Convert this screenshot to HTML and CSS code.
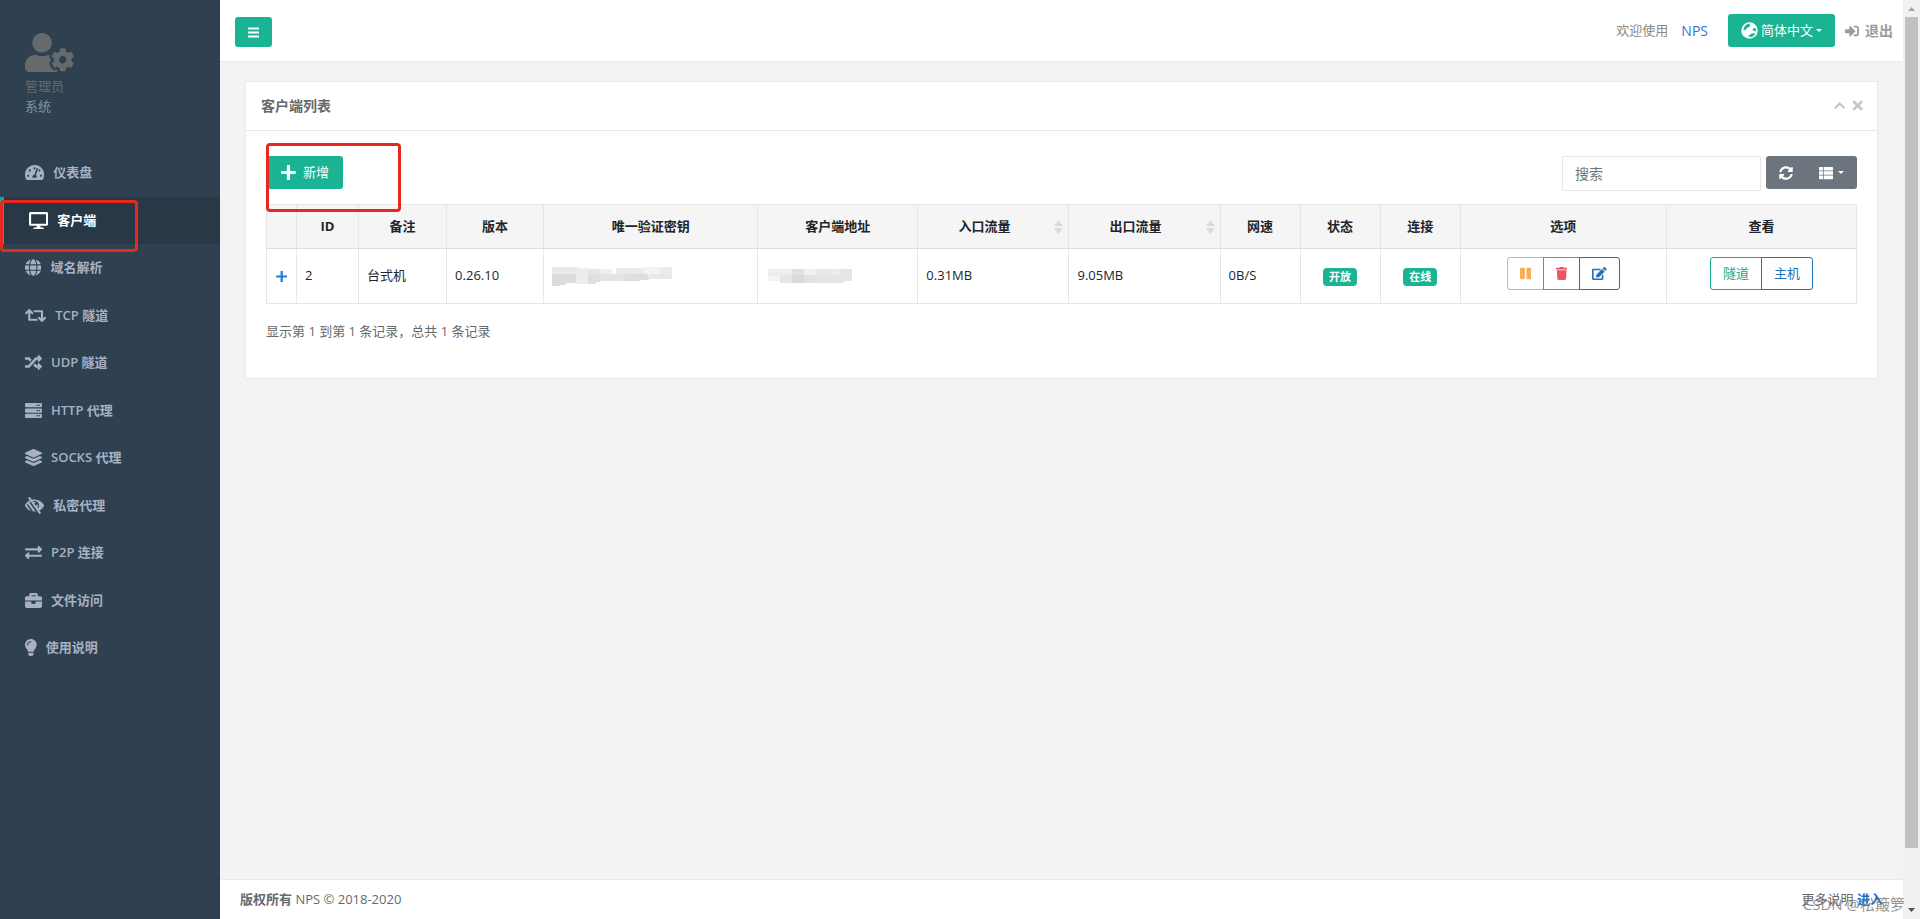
FILE: index.html
```html
<!DOCTYPE html>
<html lang="zh-CN">
<head>
<meta charset="utf-8">
<meta name="viewport" content="width=device-width, initial-scale=1">
<title>客户端列表</title>
<link rel="stylesheet" href="styles.css">
</head>
<body>
<div class="app">
  <nav class="sidebar" aria-label="主菜单">
    <div class="profile">
      <svg class="profile-icon" viewBox="0 0 640 512"><path d="M610.5 373.3c2.6-14.1 2.6-28.5 0-42.6l25.8-14.9c3-1.7 4.3-5.2 3.3-8.5-6.7-21.6-18.2-41.2-33.2-57.4-2.3-2.5-6-3.1-9-1.4l-25.8 14.9c-10.9-9.3-23.4-16.5-36.9-21.3v-29.8c0-3.4-2.4-6.4-5.7-7.1-22.3-5-45-4.8-66.2 0-3.3.7-5.7 3.7-5.7 7.1v29.8c-13.5 4.8-26 12-36.9 21.3l-25.8-14.9c-2.9-1.7-6.7-1.1-9 1.4-15 16.2-26.5 35.8-33.2 57.4-1 3.3.4 6.8 3.3 8.5l25.8 14.9c-2.6 14.1-2.6 28.5 0 42.6l-25.8 14.9c-3 1.7-4.3 5.2-3.3 8.5 6.7 21.6 18.2 41.1 33.2 57.4 2.3 2.5 6 3.1 9 1.4l25.8-14.9c10.9 9.3 23.4 16.5 36.9 21.3v29.8c0 3.4 2.4 6.4 5.7 7.1 22.3 5 45 4.8 66.2 0 3.3-.7 5.7-3.7 5.7-7.1v-29.8c13.5-4.8 26-12 36.9-21.3l25.8 14.9c2.9 1.7 6.7 1.1 9-1.4 15-16.2 26.5-35.8 33.2-57.4 1-3.3-.4-6.8-3.3-8.5l-25.8-14.9zM496 400.5c-26.8 0-48.5-21.8-48.5-48.5s21.8-48.5 48.5-48.5 48.5 21.8 48.5 48.5-21.7 48.5-48.5 48.5zM224 256c70.7 0 128-57.3 128-128S294.7 0 224 0 96 57.3 96 128s57.3 128 128 128zm201.2 226.5c-2.3-1.2-4.6-2.6-6.8-3.9l-7.9 4.6c-6 3.4-12.8 5.3-19.6 5.3-10.9 0-21.4-4.6-28.9-12.6-18.3-19.8-32.3-43.9-40.2-69.6-5.5-17.7 1.9-36.4 17.9-45.7l7.9-4.6c-.1-2.6-.1-5.2 0-7.8l-7.9-4.6c-16-9.2-23.4-28-17.9-45.7.9-2.9 2.2-5.8 3.2-8.7-3.8-.3-7.5-1.2-11.4-1.2h-16.7c-22.2 10.2-46.9 16-72.9 16s-50.6-5.8-72.9-16h-16.7C60.2 288 0 348.2 0 422.4V464c0 26.5 21.5 48 48 48h352c10.1 0 19.5-3.2 27.2-8.5-1.2-3.8-2-7.7-2-11.8v-9.2z"/></svg>
      <span class="profile-name">管理员</span>
      <span class="profile-role">系统</span>
    </div>
    <ul class="menu">
      <li><a class="menu-link" href="#dashboard"><svg class="menu-icon" viewBox="0 0 576 512"><path d="M288 32C128.940 32 0 160.940 0 320c0 52.800 14.250 102.260 39.060 144.800 5.610 9.620 16.300 15.200 27.440 15.200h443c11.140 0 21.830-5.580 27.440-15.200C561.750 422.260 576 372.800 576 320c0-159.060-128.940-288-288-288zm0 64c14.710 0 26.580 10.130 30.320 23.650-1.110 2.260-2.640 4.230-3.450 6.670l-9.220 27.670c-5.130 3.490-10.970 6.010-17.640 6.010-17.670 0-32-14.330-32-32S270.330 96 288 96zM96 384c-17.670 0-32-14.330-32-32s14.330-32 32-32 32 14.330 32 32-14.330 32-32 32zm48-160c-17.670 0-32-14.330-32-32s14.330-32 32-32 32 14.330 32 32-14.330 32-32 32zm246.770-72.410l-61.330 184C343.130 347.330 352 364.540 352 384c0 11.720-3.380 22.550-8.880 32H232.880c-5.500-9.450-8.880-20.280-8.880-32 0-33.940 26.500-61.430 59.900-63.590l61.340-184.010c4.170-12.560 17.730-19.450 30.360-15.170 12.570 4.190 19.350 17.790 15.170 30.360zm14.660 57.200l15.520-46.550c3.470-1.290 7.130-2.230 11.050-2.230 17.670 0 32 14.330 32 32s-14.330 32-32 32c-11.380-.01-20.890-6.280-26.570-15.220zM480 384c-17.670 0-32-14.330-32-32s14.330-32 32-32 32 14.330 32 32-14.330 32-32 32z"/></svg>仪表盘</a></li>
      <li class="active"><a class="menu-link" href="#clients" aria-current="page"><svg class="menu-icon" viewBox="0 0 576 512"><path d="M528 0H48C21.500 0 0 21.500 0 48v320c0 26.500 21.500 48 48 48h192l-16 48h-72c-13.300 0-24 10.700-24 24s10.700 24 24 24h272c13.300 0 24-10.700 24-24s-10.700-24-24-24h-72l-16-48h192c26.500 0 48-21.500 48-48V48c0-26.500-21.500-48-48-48zm-16 352H64V64h448v288z"/></svg>客户端</a></li>
      <li><a class="menu-link" href="#hosts"><svg class="menu-icon" viewBox="0 0 496 512"><path d="M336.500 160C322 70.700 287.800 8 248 8s-74 62.700-88.500 152h177zM152 256c0 22.200 1.200 43.500 3.300 64h185.300c2.100-20.500 3.300-41.800 3.300-64s-1.200-43.500-3.300-64H155.300c-2.100 20.500-3.300 41.800-3.300 64zm324.700-96c-28.600-67.900-86.500-120.400-158-141.600 24.400 33.800 41.200 84.700 50 141.600h108zM177.200 18.400C105.800 39.600 47.800 92.100 19.300 160h108c8.700-56.900 25.500-107.800 49.900-141.600zM487.400 192H372.700c2.100 21 3.300 42.500 3.300 64s-1.200 43-3.300 64h114.600c5.500-20.500 8.600-41.800 8.600-64s-3.100-43.500-8.500-64zM120 256c0-21.500 1.200-43 3.300-64H8.600C3.200 212.500 0 233.800 0 256s3.200 43.500 8.600 64h114.600c-2-21-3.200-42.500-3.200-64zm39.500 96c14.500 89.300 48.700 152 88.500 152s74-62.700 88.500-152h-177zm159.300 141.600c71.400-21.200 129.400-73.700 158-141.600h-108c-8.800 56.900-25.600 107.800-50 141.600zM19.300 352c28.600 67.900 86.500 120.400 158 141.600-24.400-33.800-41.200-84.700-50-141.600h-108z"/></svg>域名解析</a></li>
      <li><a class="menu-link" href="#tcp"><svg class="menu-icon" viewBox="0 0 640 512"><path d="M629.657 343.598L528.971 444.284c-9.373 9.372-24.568 9.372-33.941 0L394.343 343.598c-9.373-9.373-9.373-24.569 0-33.941l10.823-10.823c9.562-9.562 25.133-9.340 34.419.492L480 342.118V160H292.451a24.005 24.005 0 0 1-16.971-7.029l-16-16C244.361 121.851 255.069 96 276.451 96H520c13.255 0 24 10.745 24 24v222.118l40.416-42.792c9.285-9.831 24.856-10.054 34.419-.492l10.823 10.823c9.372 9.372 9.372 24.569-.001 33.941zm-265.138 15.431A23.999 23.999 0 0 0 347.548 352H160V169.881l40.416 42.792c9.286 9.831 24.856 10.054 34.419.491l10.822-10.822c9.373-9.373 9.373-24.569 0-33.941L144.971 67.716c-9.373-9.373-24.569-9.373-33.941 0L10.343 168.402c-9.373 9.373-9.373 24.569 0 33.941l10.822 10.822c9.562 9.562 25.133 9.340 34.419-.491L96 169.881V392c0 13.255 10.745 24 24 24h243.549c21.382 0 32.090-25.851 16.971-40.971l-16.001-16z"/></svg>TCP 隧道</a></li>
      <li><a class="menu-link" href="#udp"><svg class="menu-icon" viewBox="0 0 512 512"><path d="M504.971 359.029c9.373 9.373 9.373 24.569 0 33.941l-80 79.984c-15.010 15.010-40.971 4.490-40.971-16.971V416h-58.785a12.004 12.004 0 0 1-8.773-3.812l-70.556-75.596 53.333-57.143L352 336h32v-39.981c0-21.438 25.943-31.998 40.971-16.971l80 79.981zM12 176h84l52.781 56.551 53.333-57.143-70.556-75.596A11.999 11.999 0 0 0 122.785 96H12c-6.627 0-12 5.373-12 12v56c0 6.627 5.373 12 12 12zm372 0v39.984c0 21.460 25.961 31.980 40.971 16.971l80-79.984c9.373-9.373 9.373-24.569 0-33.941l-80-79.981C409.943 24.021 384 34.582 384 56.019V96h-58.785a12.004 12.004 0 0 0-8.773 3.812L96 336H12c-6.627 0-12 5.373-12 12v56c0 6.627 5.373 12 12 12h110.785c3.326 0 6.503-1.381 8.773-3.812L352 176h32z"/></svg>UDP 隧道</a></li>
      <li><a class="menu-link" href="#http"><svg class="menu-icon" viewBox="0 0 512 512"><path d="M480 160H32c-17.673 0-32-14.327-32-32V64c0-17.673 14.327-32 32-32h448c17.673 0 32 14.327 32 32v64c0 17.673-14.327 32-32 32zm-48-88c-13.255 0-24 10.745-24 24s10.745 24 24 24 24-10.745 24-24-10.745-24-24-24zm-64 0c-13.255 0-24 10.745-24 24s10.745 24 24 24 24-10.745 24-24-10.745-24-24-24z"/><path d="M480 320H32c-17.673 0-32-14.327-32-32v-64c0-17.673 14.327-32 32-32h448c17.673 0 32 14.327 32 32v64c0 17.673-14.327 32-32 32zm-48-88c-13.255 0-24 10.745-24 24s10.745 24 24 24 24-10.745 24-24-10.745-24-24-24zm-64 0c-13.255 0-24 10.745-24 24s10.745 24 24 24 24-10.745 24-24-10.745-24-24-24z"/><path d="M480 480H32c-17.673 0-32-14.327-32-32v-64c0-17.673 14.327-32 32-32h448c17.673 0 32 14.327 32 32v64c0 17.673-14.327 32-32 32zm-48-88c-13.255 0-24 10.745-24 24s10.745 24 24 24 24-10.745 24-24-10.745-24-24-24zm-64 0c-13.255 0-24 10.745-24 24s10.745 24 24 24 24-10.745 24-24-10.745-24-24-24z"/></svg>HTTP 代理</a></li>
      <li><a class="menu-link" href="#socks"><svg class="menu-icon" viewBox="0 0 512 512"><path d="M12.410 148.020l232.940 105.670c6.800 3.090 14.490 3.090 21.290 0l232.940-105.670c16.550-7.510 16.550-32.520 0-40.030L266.650 2.310a25.607 25.607 0 0 0-21.290 0L12.410 107.980c-16.550 7.510-16.550 32.530 0 40.040zm487.180 88.280l-58.090-26.330-161.640 73.270c-7.560 3.430-15.590 5.170-23.860 5.170s-16.290-1.740-23.860-5.170L70.510 209.970l-58.100 26.330c-16.550 7.500-16.550 32.500 0 40l232.940 105.590c6.800 3.080 14.490 3.080 21.290 0L499.590 276.300c16.550-7.500 16.550-32.500 0-40zm0 127.800l-57.870-26.230-161.860 73.370c-7.560 3.430-15.590 5.170-23.860 5.170s-16.290-1.740-23.860-5.170L70.290 337.870 12.410 364.100c-16.550 7.500-16.550 32.500 0 40l232.940 105.590c6.800 3.080 14.490 3.080 21.290 0L499.590 404.100c16.550-7.500 16.550-32.500 0-40z"/></svg>SOCKS 代理</a></li>
      <li><a class="menu-link" href="#secret"><svg class="menu-icon" viewBox="0 0 576 512"><path d="M569.344 231.631C512.960 135.949 407.810 72 288 72c-28.468 0-56.102 3.619-82.451 10.415L152.778 10.240c-7.601-10.858-22.564-13.500-33.423-5.900l-13.114 9.178c-10.860 7.601-13.502 22.566-5.900 33.426l43.131 58.395C89.449 131.730 40.228 174.683 6.682 231.581c-.01.017-.023.033-.034.05-8.765 14.875-8.964 33.528 0 48.739 38.500 65.332 99.742 115.862 172.859 141.349L55.316 244.302A272.194 272.194 0 0 1 83.610 208.390l119.400 170.580h.01l40.630 58.040a330.055 330.055 0 0 0 78.940 1.170l-189.980-271.400a277.628 277.628 0 0 1 38.777-21.563l251.836 356.544c7.601 10.858 22.564 13.499 33.423 5.900l13.114-9.178c10.860-7.601 13.502-22.567 5.900-33.426l-43.120-58.377-.007-.009c57.161-27.978 104.835-72.040 136.810-126.301a47.938 47.938 0 0 0 .001-48.739zM390.026 345.940l-19.066-27.230c24.682-32.567 27.711-76.353 8.800-111.680v.03c0 23.650-19.170 42.820-42.820 42.820-23.828 0-42.820-19.349-42.820-42.820 0-23.650 19.170-42.820 42.820-42.820h.03c-24.750-13.249-53.522-15.643-79.510-7.680l-19.068-27.237C253.758 123.306 270.488 120 288 120c75.162 0 136 60.826 136 136 0 34.504-12.833 65.975-33.974 89.940z"/></svg>私密代理</a></li>
      <li><a class="menu-link" href="#p2p"><svg class="menu-icon" viewBox="0 0 512 512"><path d="M0 168v-16c0-13.255 10.745-24 24-24h360V80c0-21.367 25.899-32.042 40.971-16.971l80 80c9.372 9.373 9.372 24.569 0 33.941l-80 80C409.956 271.982 384 261.456 384 240v-48H24c-13.255 0-24-10.745-24-24zm488 152H128v-48c0-21.314-25.862-32.080-40.971-16.971l-80 80c-9.372 9.373-9.372 24.569 0 33.941l80 80C102.057 463.997 128 453.437 128 432v-48h360c13.255 0 24-10.745 24-24v-16c0-13.255-10.745-24-24-24z"/></svg>P2P 连接</a></li>
      <li><a class="menu-link" href="#files"><svg class="menu-icon" viewBox="0 0 512 512"><path d="M320 336c0 8.840-7.160 16-16 16h-96c-8.840 0-16-7.160-16-16v-48H0v144c0 25.600 22.400 48 48 48h416c25.600 0 48-22.400 48-48V288H320v48zm144-208h-80V80c0-25.600-22.400-48-48-48H176c-25.600 0-48 22.400-48 48v48H48c-25.600 0-48 22.400-48 48v80h512v-80c0-25.600-22.400-48-48-48zm-144 0H192V96h128v32z"/></svg>文件访问</a></li>
      <li><a class="menu-link" href="#help"><svg class="menu-icon" viewBox="0 0 352 512"><path d="M96.060 454.350c.01 6.290 1.870 12.450 5.360 17.690l17.090 25.690a31.990 31.990 0 0 0 26.640 14.280h61.710a31.990 31.990 0 0 0 26.640-14.280l17.090-25.690a31.989 31.989 0 0 0 5.360-17.690l.04-38.350H96.010l.05 38.350zM0 176c0 44.370 16.450 84.850 43.560 115.780 16.520 18.850 42.360 58.230 52.210 91.450.04.26.07.52.11.78h160.240c.04-.26.07-.51.11-.78 9.850-33.220 35.690-72.600 52.210-91.450C335.550 260.850 352 220.370 352 176 352 78.610 272.910-.3 175.450 0 73.440.31 0 82.970 0 176zm176-80c-44.110 0-80 35.890-80 80 0 8.840-7.160 16-16 16s-16-7.160-16-16c0-61.760 50.240-112 112-112 8.840 0 16 7.160 16 16s-7.160 16-16 16z"/></svg>使用说明</a></li>
    </ul>
  </nav>

  <div class="page">
    <header class="topbar">
      <button class="btn btn-primary btn-toggle" type="button" aria-label="切换菜单"><svg class="icon" viewBox="0 0 448 512"><path d="M0 62h448v76H0zM0 218h448v76H0zM0 374h448v76H0z"/></svg></button>
      <div class="topbar-right">
        <span class="welcome">欢迎使用</span>
        <a class="brand" href="#nps">NPS</a>
        <button class="btn btn-primary btn-lang" type="button"><svg class="icon-lg" viewBox="0 0 512 512"><path fill-rule="evenodd" d="M256 8a248 248 0 1 0 0 496 248 248 0 0 0 0-496zM205 60l70-16-18 40 22 34-38 38-62 20-18 46-50 24-38-12c8-84 62-150 132-174zM352 212l70-42 34 62-16 48-52-8-36-28zM282 372l66-36 88 10c-26 58-82 98-144 106l-72-20z"/></svg>简体中文<span class="caret"></span></button>
        <a class="logout" href="#logout"><svg class="icon-md" viewBox="0 0 512 512"><path d="M416 448h-84c-6.600 0-12-5.400-12-12v-40c0-6.600 5.400-12 12-12h84c17.700 0 32-14.300 32-32V160c0-17.700-14.300-32-32-32h-84c-6.600 0-12-5.400-12-12V76c0-6.600 5.400-12 12-12h84c53 0 96 43 96 96v192c0 53-43 96-96 96zm-47-201L201 79c-15-15-41-4.500-41 17v96H24c-13.300 0-24 10.700-24 24v96c0 13.300 10.700 24 24 24h136v96c0 21.500 26 32 41 17l168-168c9.300-9.400 9.300-24.600 0-34z"/></svg>退出</a>
      </div>
    </header>

    <main class="content">
      <section class="panel">
        <div class="panel-head">
          <h1 class="panel-title">客户端列表</h1>
          <div class="panel-tools">
            <button class="tool" type="button" aria-label="折叠"><svg class="icon" viewBox="0 0 448 512"><path d="M224 120L444 340l-58 58-162-162L62 398 4 340z"/></svg></button>
            <button class="tool" type="button" aria-label="关闭"><svg class="icon" viewBox="0 0 448 512"><path d="M88 48L224 184 360 48l72 72-136 136 136 136-72 72-136-136L88 464l-72-72 136-136L16 120z"/></svg></button>
          </div>
        </div>
        <div class="panel-body">
          <div class="toolbar">
            <div class="add-wrap">
              <button class="btn btn-primary btn-add" type="button"><svg class="icon-lg" viewBox="0 0 448 512"><path d="M416 208H272V64c0-17.670-14.330-32-32-32h-32c-17.670 0-32 14.330-32 32v144H32c-17.670 0-32 14.330-32 32v32c0 17.670 14.330 32 32 32h144v144c0 17.670 14.330 32 32 32h32c17.670 0 32-14.330 32-32V304h144c17.670 0 32-14.330 32-32v-32c0-17.670-14.330-32-32-32z"/></svg>新增</button>
              <span class="mark mark-add"></span>
            </div>
            <div class="toolbar-right">
              <input class="search" type="search" placeholder="搜索" aria-label="搜索">
              <div class="group-solid">
                <button class="btn btn-grey" type="button" aria-label="刷新"><svg class="icon-md" viewBox="0 0 512 512"><path d="M370.720 133.280C339.458 104.008 298.888 87.962 255.848 88c-77.458.068-144.328 53.178-162.791 126.850-1.344 5.363-6.122 9.150-11.651 9.150H24.103c-7.498 0-13.194-6.807-11.807-14.176C33.933 94.924 134.813 8 256 8c66.448 0 126.791 26.136 171.315 68.685L463.030 40.970C478.149 25.851 504 36.559 504 57.941V192c0 13.255-10.745 24-24 24H345.941c-21.382 0-32.090-25.851-16.971-40.971l41.750-41.749zM32 296h134.059c21.382 0 32.090 25.851 16.971 40.971l-41.750 41.750c31.262 29.273 71.835 45.319 114.876 45.280 77.418-.07 144.315-53.144 162.787-126.849 1.344-5.363 6.122-9.150 11.651-9.150h57.304c7.498 0 13.194 6.807 11.807 14.176C478.067 417.076 377.187 504 256 504c-66.448 0-126.791-26.136-171.315-68.685L48.970 471.030C33.851 486.149 8 475.441 8 454.059V320c0-13.255 10.745-24 24-24z"/></svg></button>
                <button class="btn btn-grey" type="button" aria-label="选择列"><svg class="icon-md" viewBox="0 0 512 512"><path d="M24 32h120v136H0V56c0-13 11-24 24-24zM172 32h316c13 0 24 11 24 24v112H172zM0 188h144v136H0zM172 188h340v136H172zM0 344h144v136H24c-13 0-24-11-24-24zM172 344h340v112c0 13-11 24-24 24H172z"/></svg><span class="caret caret-gap"></span></button>
              </div>
            </div>
          </div>

          <table class="grid">
            <colgroup>
              <col class="c-toggle"><col class="c-id"><col class="c-remark"><col class="c-version"><col class="c-key"><col class="c-addr"><col class="c-flow"><col class="c-flow"><col class="c-small"><col class="c-small"><col class="c-small"><col class="c-options"><col class="c-view">
            </colgroup>
            <thead>
              <tr>
                <th></th><th>ID</th><th>备注</th><th>版本</th><th>唯一验证密钥</th><th>客户端地址</th><th class="sortable">入口流量</th><th class="sortable">出口流量</th><th>网速</th><th>状态</th><th>连接</th><th>选项</th><th>查看</th>
              </tr>
            </thead>
            <tbody>
              <tr>
                <td class="center"><a class="expand" href="#detail" aria-label="展开"><svg class="icon" viewBox="0 0 448 512"><path d="M180 40h88v172h172v88H268v172h-88V300H8v-88h172z"/></svg></a></td>
                <td>2</td>
                <td>台式机</td>
                <td>0.26.10</td>
                <td><svg class="mosaic" width="120" height="19" viewBox="0 0 120 19"><path fill="#e9e9ea" d="M0 0h26v8H0z"/><path fill="#dddcdd" d="M0 7h24v9H14v2H8v1H0z"/><path fill="#ebedee" d="M24 1h14v16H24z"/><path fill="#e6e6e7" d="M36 2h12v6H36z"/><path fill="#dfdfe0" d="M36 7h12v8h-4v2h-8z"/><path fill="#f1f0f1" d="M48 2h12v5H48z"/><path fill="#e4e4e5" d="M48 7h24v7H48z"/><path fill="#e9eae9" d="M64 1h20v6H64z"/><path fill="#dedede" d="M72 7h25v6h-9v1H72z"/><path fill="#eaebec" d="M84 1h12v6H84z"/><path fill="#f1f2f2" d="M92 0h16v7H92z"/><path fill="#e8e9eb" d="M96 7h24v5H96z"/><path fill="#eaebeb" d="M108 0h12v7h-12z"/></svg></td>
                <td><svg class="mosaic" width="86" height="14" viewBox="-2 0 86 14"><path fill="#eeeeee" d="M0 0h24v7H0z"/><path fill="#f4f4f4" d="M0 7h12v5H0z"/><path fill="#e6e6e6" d="M12 6h12v8H12z"/><path fill="#e1e1df" d="M24 0h12v7H24z"/><path fill="#dadada" d="M24 6h12v8H24z"/><path fill="#eff0f2" d="M36 0h12v7H36z"/><path fill="#e2e2e3" d="M36 6h12v8H36z"/><path fill="#e7e7e5" d="M48 0h12v7H48z"/><path fill="#e5e5e5" d="M48 6h36v6h-8v2H48z"/><path fill="#ebebec" d="M60 0h12v6H60z"/><path fill="#e4e5e7" d="M72 0h12v8H72z"/></svg></td>
                <td>0.31MB</td>
                <td>9.05MB</td>
                <td>0B/S</td>
                <td class="center"><span class="badge">开放</span></td>
                <td class="center"><span class="badge">在线</span></td>
                <td class="center">
                  <div class="group">
                    <button class="btn btn-outline orange" type="button" aria-label="暂停"><svg class="icon" viewBox="0 0 448 512"><path d="M144 479H48c-26.500 0-48-21.500-48-48V79c0-26.500 21.500-48 48-48h96c26.500 0 48 21.500 48 48v352c0 26.500-21.500 48-48 48zm304-48V79c0-26.500-21.500-48-48-48h-96c-26.500 0-48 21.500-48 48v352c0 26.500 21.500 48 48 48h96c26.500 0 48-21.500 48-48z"/></svg></button>
                    <button class="btn btn-outline red" type="button" aria-label="删除"><svg class="icon" viewBox="0 0 448 512"><path d="M432 32H312l-9.400-18.700A24 24 0 0 0 281.100 0H166.800a23.720 23.720 0 0 0-21.400 13.300L136 32H16A16 16 0 0 0 0 48v32a16 16 0 0 0 16 16h416a16 16 0 0 0 16-16V48a16 16 0 0 0-16-16zM32 128l21.200 339a48 48 0 0 0 47.900 45h245.800a48 48 0 0 0 47.900-45L416 128z"/></svg></button>
                    <button class="btn btn-outline blue" type="button" aria-label="编辑"><svg class="icon" viewBox="0 0 576 512"><path d="M402.600 83.200l90.200 90.200c3.800 3.800 3.800 10 0 13.800L274.400 405.600l-92.800 10.300c-12.400 1.400-22.900-9.100-21.500-21.500l10.300-92.800L388.800 83.200c3.800-3.800 10-3.800 13.800 0zm162-22.900l-48.800-48.800c-15.200-15.200-39.900-15.200-55.200 0l-35.400 35.400c-3.800 3.800-3.800 10 0 13.800l90.200 90.200c3.800 3.800 10 3.800 13.800 0l35.400-35.400c15.200-15.300 15.200-40 0-55.200zM384 346.200V448H64V128h229.800c3.200 0 6.200-1.300 8.500-3.500l40-40c7.600-7.600 2.200-20.500-8.500-20.500H48C21.500 64 0 85.500 0 112v352c0 26.500 21.500 48 48 48h352c26.500 0 48-21.500 48-48V306.200c0-10.700-12.900-16-20.500-8.500l-40 40c-2.200 2.300-3.500 5.300-3.500 8.500z"/></svg></button>
                  </div>
                </td>
                <td class="center">
                  <div class="group">
                    <button class="btn btn-outline green" type="button">隧道</button>
                    <button class="btn btn-outline blue" type="button">主机</button>
                  </div>
                </td>
              </tr>
            </tbody>
          </table>
          <p class="summary">显示第 1 到第 1 条记录，总共 1 条记录</p>
        </div>
      </section>
    </main>

    <footer class="footer">
      <span><strong>版权所有</strong> NPS © 2018-2020</span>
      <span>更多说明 <a class="more" href="#more">进入</a></span>
    </footer>
  </div>

  <div class="scroll" aria-hidden="true">
    <svg class="scroll-arrow" viewBox="0 0 17 17"><path fill="#a3a3a3" d="M5 11h7L8.500 7z"/></svg>
    <div class="scroll-thumb"></div>
    <svg class="scroll-arrow" viewBox="0 0 17 17"><path fill="#505050" d="M5 6h7l-3.500 4z"/></svg>
  </div>

  <span class="mark mark-menu"></span>
  <span class="watermark">CSDN @松簸箩</span>
</div>
</body>
</html>
```
FILE: styles.css
```css
* { box-sizing: border-box; }

body {
  margin: 0;
  font-family: "Open Sans", "Noto Sans CJK SC", sans-serif;
  font-size: 13px;
  line-height: 1.5;
  color: #676a6c;
  background: #2f4050;
}

a { text-decoration: none; }
svg { flex: none; fill: currentColor; }

.app {
  position: relative;
  display: flex;
  min-height: 100vh;
  overflow: hidden;
}

/* Sidebar */
.sidebar { flex: none; width: 220px; background: #2f4050; }
.profile {
  display: flex;
  flex-direction: column;
  align-items: flex-start;
  padding: 33px 25px;
  color: #676a6c;
}
.profile-icon { height: 39px; margin-bottom: 5px; }
.profile-role { color: #8095a8; }
.menu { margin: 0; padding: 0; list-style: none; }
.menu-link {
  display: flex;
  align-items: center;
  gap: 9px;
  padding: 14px 20px 14px 25px;
  font-weight: 600;
  color: #a7b1c2;
}
.menu-icon { height: 17px; }
.active { border-left: 4px solid #19aa8d; background: #293846; }
.active .menu-link { color: #fff; }

/* Page */
.page {
  flex: 1;
  min-width: 0;
  display: flex;
  flex-direction: column;
  background: #f3f3f4;
}
.topbar {
  display: flex;
  justify-content: space-between;
  align-items: flex-start;
  padding: 14px 10px 14px 15px;
  border-bottom: 1px solid #e7eaec;
  background: #fff;
}
.topbar-right { display: flex; align-items: center; color: #888; }
.brand { margin: 0 20px 0 13px; font-size: 14px; color: #3b73cf; }
.logout {
  display: flex;
  align-items: center;
  gap: 6px;
  margin-left: 10px;
  font-size: 14px;
  font-weight: 600;
  color: #999c9e;
}

/* Buttons */
.btn {
  display: inline-flex;
  align-items: center;
  justify-content: center;
  height: 33px;
  padding: 0 12px;
  border: 1px solid transparent;
  border-radius: 3px;
  font: inherit;
  color: #fff;
  cursor: pointer;
}
.btn-primary { background: #1ab394; }
.btn-toggle { height: 30px; margin-top: 3px; }
.btn-lang { gap: 3px; }
.btn-add { gap: 7px; padding: 0 13px 0 14px; }
.btn-grey { background: #6c757d; }
.icon { height: 13px; }
.icon-md { height: 14px; }
.icon-lg { height: 17px; }
.caret {
  border: 3px solid transparent;
  border-top-color: currentColor;
  border-bottom: 0;
}
.caret-gap { margin-left: 5px; }

/* Panel */
.content { flex: 1; padding: 19px 25px 0; }
.panel { border: 1px solid #e7eaec; background: #fff; }
.panel-head {
  display: flex;
  justify-content: space-between;
  align-items: center;
  padding: 13px 14px 14px 15px;
  border-bottom: 1px solid #e7eaec;
}
.panel-title { margin: 0; font-size: 14px; font-weight: 600; }
.panel-tools { display: flex; gap: 6px; }
.tool {
  display: flex;
  padding: 0;
  border: 0;
  background: none;
  color: #c4c4c4;
  cursor: pointer;
}
.panel-body { padding: 25px 20px 36px; }
.toolbar {
  display: flex;
  justify-content: space-between;
  align-items: flex-start;
  margin-bottom: 13px;
}
.add-wrap { position: relative; }
.toolbar-right { display: flex; align-items: flex-start; gap: 5px; }
.search {
  width: 199px;
  height: 35px;
  padding: 0 12px;
  border: 1px solid #e5e6e7;
  border-radius: 1px;
  font: inherit;
  font-size: 14px;
  color: inherit;
}
.search::placeholder { color: #6c757d; }
.group-solid { display: flex; border-radius: 3px; overflow: hidden; }
.group-solid .btn { border-radius: 0; }

/* Table */
.grid {
  width: 100%;
  table-layout: fixed;
  border-collapse: collapse;
  color: #212529;
}
.grid th, .grid td { border: 1px solid #e7e7e7; }
.grid th {
  height: 44px;
  padding: 0 8px;
  border-bottom-color: #ddd;
  background: #f5f5f6;
  font-weight: 700;
}
.grid td { height: 55px; padding: 0 8px; }
.grid .center { padding: 0; text-align: center; }
.grid .sortable {
  padding-right: 26px;
  background: #f5f5f6 url("data:image/svg+xml,%3Csvg xmlns='http://www.w3.org/2000/svg' width='19' height='16'%3E%3Cpath fill='%23dadada' d='M5 7h9L9.500 1zM5 9h9l-4.500 6z'/%3E%3C/svg%3E") no-repeat right center;
}
.c-toggle { width: 30px; }
.c-id { width: 62px; }
.c-remark { width: 88px; }
.c-version { width: 97px; }
.c-key { width: 214px; }
.c-addr { width: 160px; }
.c-flow { width: 151px; }
.c-small { width: 80px; }
.c-options { width: 206px; }
.c-view { width: 190px; }
.expand { display: flex; justify-content: center; color: #1a7be0; }
.mosaic { display: block; }
.badge {
  display: inline-block;
  padding: 0 6px;
  border-radius: 4px;
  font-size: 11px;
  font-weight: 700;
  line-height: 18px;
  vertical-align: middle;
  color: #fff;
  background: #1ab394;
}
.group { display: inline-flex; margin-bottom: 5px; vertical-align: middle; }
.btn-outline { border-color: currentColor; background: #fff; }
.group .btn + .btn { margin-left: -1px; border-top-left-radius: 0; border-bottom-left-radius: 0; }
.group .btn:not(:last-child) { border-top-right-radius: 0; border-bottom-right-radius: 0; }
.orange { color: #f8ac59; }
.red { color: #ed5565; }
.blue { color: #1f72b8; }
.green { color: #1aa88b; }
.summary { margin: 18px 0 0; }

.footer {
  display: flex;
  justify-content: space-between;
  padding: 10px 20px;
  border-top: 1px solid #e7eaec;
  background: #fff;
}
.footer strong { font-weight: 700; }
.more { font-weight: 600; color: #1a6fd6; }

/* Scroll track */
.scroll {
  flex: none;
  display: flex;
  flex-direction: column;
  width: 17px;
  background: #f1f1f1;
}
.scroll-arrow { width: 17px; height: 17px; }
.scroll-thumb { flex: 1; margin: 0 2px 54px; background: #c1c1c1; }

/* Overlays */
.mark {
  position: absolute;
  border: 3px solid #e8281e;
  border-radius: 4px;
  pointer-events: none;
}
.mark-add { top: -13px; left: 0; width: 135px; height: 69px; }
.mark-menu { top: 200px; left: 0; width: 138px; height: 52px; }
.watermark {
  position: absolute;
  right: 15px;
  bottom: 4px;
  font-size: 15px;
  white-space: nowrap;
  color: rgba(110, 110, 110, 0.75);
}
```
